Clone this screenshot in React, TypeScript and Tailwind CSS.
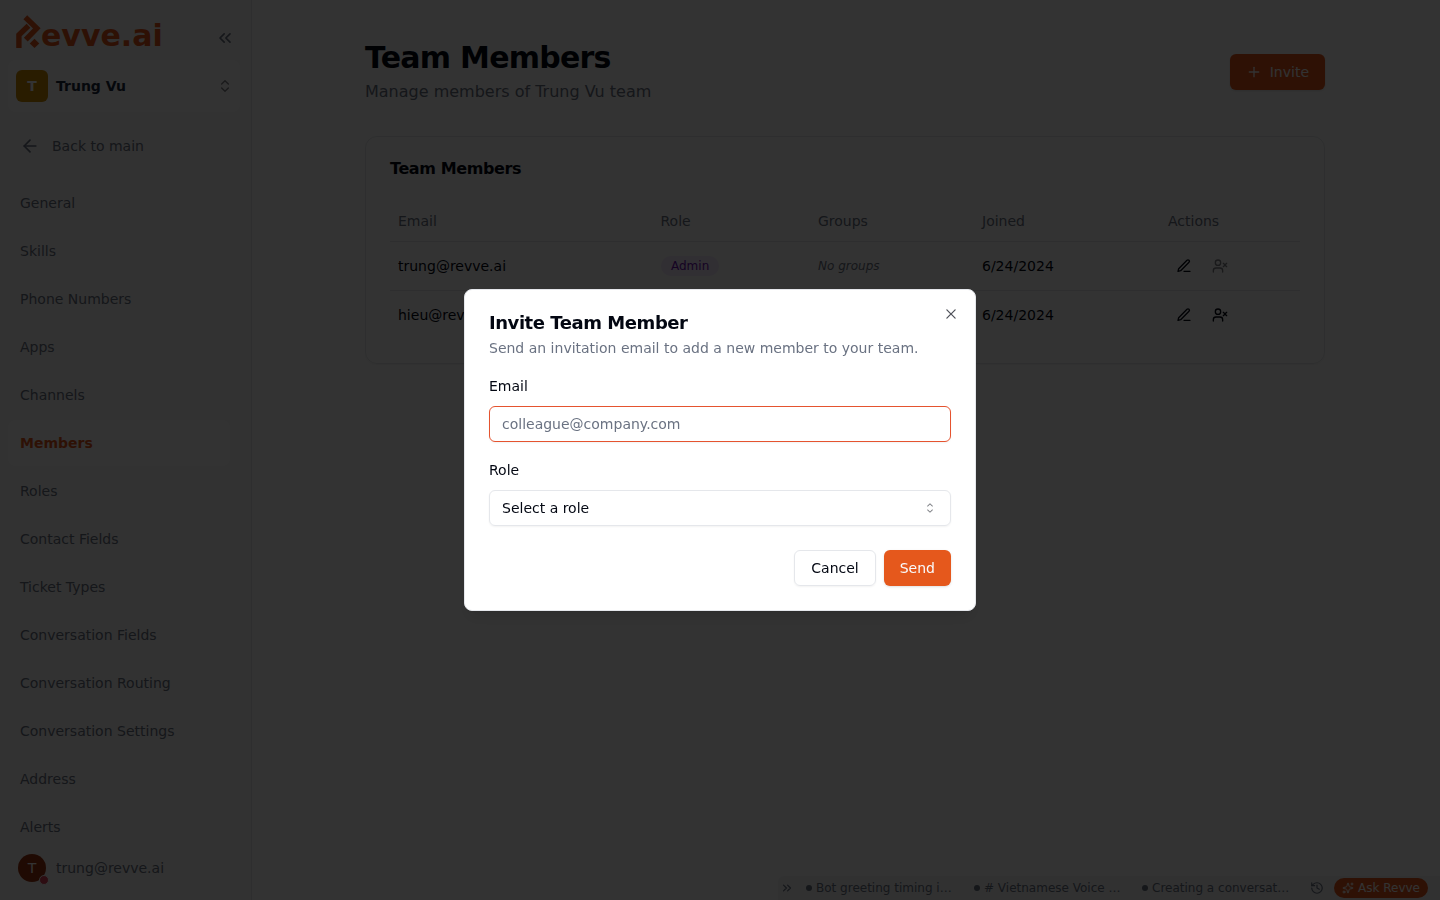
import { ArrowLeft, ChevronsLeft, ChevronsRight, ChevronsUpDown, History, Plus, Sparkles, UserX } from 'lucide-react';
import { RxCaretSort, RxCross2 } from 'react-icons/rx';

const navItems = [
    'General',
    'Skills',
    'Phone Numbers',
    'Apps',
    'Channels',
    'Members',
    'Roles',
    'Contact Fields',
    'Ticket Types',
    'Conversation Fields',
    'Conversation Routing',
    'Conversation Settings',
    'Address',
    'Alerts',
];

const members = [
    { email: 'trung@revve.ai', role: 'Admin', joined: '6/24/2024', removable: false },
    { email: 'hieu@revve.ai', role: 'Admin', joined: '6/24/2024', removable: true },
];

const chats = ['Bot greeting timing i…', '# Vietnamese Voice …', 'Creating a conversat…'];

function Logo() {
    return (
        <div className="flex h-9 items-end text-[#e5581c]">
            <svg viewBox="0 0 26 34" className="h-[34px] w-[26px]" fill="none" stroke="currentColor" strokeWidth="5.4">
                <path d="M2.9 33V20L12.5 10.8" />
                <path d="M9.3 2.2L20.8 13.4L9.8 24.6" />
                <path d="M18.5 23.8L23.3 28.4L18.5 33L13.7 28.4Z" fill="currentColor" stroke="none" />
            </svg>
            <span className="-mb-px -ml-px text-[30px] leading-[29px] font-bold">evve.ai</span>
        </div>
    );
}

function EditIcon() {
    return (
        <svg viewBox="0 0 24 24" className="h-4 w-4" fill="none" stroke="currentColor" strokeWidth="2" strokeLinecap="round" strokeLinejoin="round">
            <path d="M12 20h9" />
            <path d="M16.5 3.5a2.12 2.12 0 0 1 3 3L7 19l-4 1 1-4Z" />
        </svg>
    );
}

function Sidebar() {
    return (
        <aside className="flex w-[252px] shrink-0 flex-col border-r border-gray-200 bg-[#fafafa]">
            <div className="flex h-[60px] items-center justify-between pt-0.5 pr-4 pl-4">
                <Logo />
                <ChevronsLeft className="mt-3.5 h-5 w-5 text-gray-500" />
            </div>

            {/* Team switcher */}
            <div className="mr-[11px] ml-2 flex h-[52px] shrink-0 items-center rounded-lg bg-white pr-[7px] pl-2">
                <div className="flex h-8 w-8 items-center justify-center rounded-md bg-[#ca8a04] text-sm font-bold text-white">T</div>
                <span className="ml-2 text-sm font-bold text-slate-800">Trung Vu</span>
                <ChevronsUpDown className="ml-auto h-4 w-4 opacity-50" />
            </div>

            <div className="mt-5 flex h-7 shrink-0 items-center pl-5 text-sm text-gray-500">
                <ArrowLeft className="mr-3 h-5 w-5" />
                Back to main
            </div>

            <nav className="mt-5 flex min-h-0 flex-1 flex-col gap-0.5 overflow-hidden pr-[21px] pl-2">
                {navItems.map((item) => (
                    <a
                        key={item}
                        className={
                            item === 'Members'
                                ? 'flex h-[46px] shrink-0 items-center rounded-lg bg-white px-3 text-sm font-bold text-[#e5581c]'
                                : 'flex h-[46px] shrink-0 items-center rounded-lg px-3 text-sm text-gray-500'
                        }
                    >
                        {item}
                    </a>
                ))}
            </nav>

            <div className="flex h-[60px] shrink-0 items-center pb-1 pl-[18px]">
                <div className="relative flex h-7 w-7 items-center justify-center rounded-full bg-[#9a3412] text-sm text-white">
                    T
                    <span className="absolute -right-[3px] -bottom-[3px] h-[10px] w-[10px] rounded-full border border-[#fafafa] bg-[#e0445a]" />
                </div>
                <span className="ml-[10px] text-sm text-gray-500">trung@revve.ai</span>
            </div>
        </aside>
    );
}

function MembersTable() {
    return (
        <table className="w-full table-fixed border-separate border-spacing-0 text-sm">
            <thead>
                <tr className="h-[41px] text-left text-gray-500">
                    <th className="w-[262.5px] border-b border-gray-200 px-2 font-normal">Email</th>
                    <th className="w-[157.5px] border-b border-gray-200 px-2 font-normal">Role</th>
                    <th className="w-[164px] border-b border-gray-200 px-2 font-normal">Groups</th>
                    <th className="w-[186px] border-b border-gray-200 px-2 font-normal">Joined</th>
                    <th className="border-b border-gray-200 px-2 font-normal">Actions</th>
                </tr>
            </thead>
            <tbody className="[&>tr:first-child>td]:border-b [&>tr:first-child>td]:border-gray-200">
                {members.map((m) => (
                    <tr key={m.email} className="h-[49px] last:h-12">
                        <td className="px-2">{m.email}</td>
                        <td className="px-2">
                            <div className="flex">
                                <span className="flex h-5 items-center rounded-full bg-purple-100 pr-2.5 pl-[10.5px] text-xs text-purple-800">{m.role}</span>
                            </div>
                        </td>
                        <td className="px-2 text-xs text-gray-500 italic">No groups</td>
                        <td className="px-2">{m.joined}</td>
                        <td className="px-2">
                            <div className="flex gap-5 pl-2">
                                <EditIcon />
                                <UserX className={m.removable ? 'h-4 w-4' : 'h-4 w-4 opacity-50'} />
                            </div>
                        </td>
                    </tr>
                ))}
            </tbody>
        </table>
    );
}

function ChatBar() {
    return (
        <div className="absolute right-0 bottom-0 flex h-6 w-[662px] items-center rounded-tl-md bg-gray-100 pr-3 text-xs text-gray-500">
            <ChevronsRight className="ml-0.5 h-3.5 w-3.5" />
            {chats.map((chat) => (
                <div key={chat} className="ml-3 flex w-[156px] items-center gap-1">
                    <span className="h-1.5 w-1.5 shrink-0 rounded-full bg-gray-500" />
                    <span className="whitespace-nowrap">{chat}</span>
                </div>
            ))}
            <History className="ml-auto h-3.5 w-3.5" />
            <div className="ml-2.5 flex h-5 w-[94px] items-center justify-center gap-1 rounded-full bg-[#e5581c] text-white">
                <Sparkles className="h-3 w-3" />
                Ask Revve
            </div>
        </div>
    );
}

function InviteDialog() {
    return (
        <div className="fixed inset-0 flex items-center justify-center bg-black/80">
            <div className="relative flex w-[512px] flex-col rounded-lg border border-gray-200 bg-white p-6 shadow-lg">
                <h2 className="text-lg leading-[18px] font-semibold tracking-tight">Invite Team Member</h2>
                <p className="mt-1.5 text-sm text-gray-500">Send an invitation email to add a new member to your team.</p>

                <label className="mt-4 text-sm leading-6">Email</label>
                <input
                    type="email"
                    placeholder="colleague@company.com"
                    className="mt-2 h-9 rounded-md border border-[#e5532f] px-3 text-sm shadow-xs outline-none placeholder:text-gray-500"
                />

                <label className="mt-4 text-sm leading-6">Role</label>
                <button className="mt-2 flex h-9 items-center justify-between rounded-md border border-gray-200 px-3 text-sm shadow-xs">
                    Select a role
                    <RxCaretSort className="h-4 w-4 opacity-50" />
                </button>

                <div className="mt-6 flex justify-end gap-2 text-sm">
                    <button className="h-9 rounded-md border border-gray-200 px-4 shadow-xs">Cancel</button>
                    <button className="h-9 rounded-md bg-[#e5581c] px-4 text-gray-50 shadow-sm">Send</button>
                </div>

                <button className="absolute top-4 right-4 opacity-70">
                    <RxCross2 className="h-4 w-4" />
                </button>
            </div>
        </div>
    );
}

export default function App() {
    return (
        <div className="relative flex h-screen overflow-hidden bg-white font-['DejaVu_Sans',sans-serif] text-gray-950">
            <Sidebar />
            <main className="flex-1 pt-10 pr-[115px] pl-[113px]">
                <div className="flex items-center justify-between">
                    <div className="flex flex-col gap-1">
                        <h1 className="text-3xl leading-9 font-bold tracking-tight">Team Members</h1>
                        <p className="text-gray-500">Manage members of Trung Vu team</p>
                    </div>
                    <button className="flex h-9 items-center gap-2 rounded-md bg-[#e5581c] px-4 text-sm text-gray-50 shadow-sm">
                        <Plus className="h-4 w-4" />
                        Invite
                    </button>
                </div>

                <section className="mt-8 rounded-xl border border-gray-200 shadow-xs">
                    <h3 className="p-6 leading-4 font-semibold tracking-tight">Team Members</h3>
                    <div className="px-6 pb-6">
                        <MembersTable />
                    </div>
                </section>
            </main>
            <ChatBar />
            <InviteDialog />
        </div>
    );
}
